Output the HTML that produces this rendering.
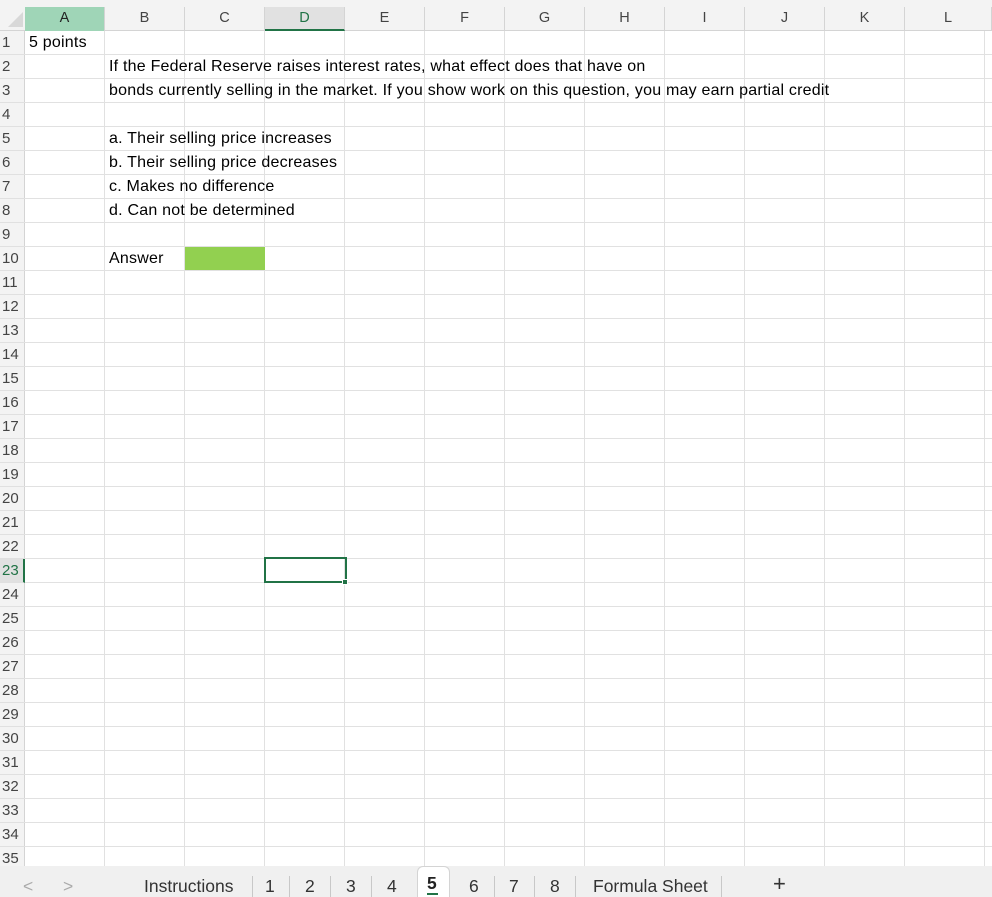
<!DOCTYPE html>
<html><head><meta charset="utf-8"><style>
*{margin:0;padding:0;box-sizing:border-box}
body{width:992px;height:897px;overflow:hidden;background:#fff;font-family:"Liberation Sans",sans-serif;position:relative;color:#000}
.abs{position:absolute}
#top{left:0;top:0;width:992px;height:31px;background:#f3f3f3;border-bottom:1px solid #d4d4d4}
.ch{position:absolute;top:7px;height:24px;border-right:1px solid #d4d4d4;text-align:center;font-size:14.5px;line-height:23px;color:#444}
#rows{left:0;top:31px;width:25px;height:836px;background:#f3f3f3;border-right:1px solid #d4d4d4}
.rn{position:absolute;left:0;width:25px;height:24px;font-size:15px;line-height:24px;padding-left:2px;color:#444;border-bottom:1px solid #e0e0e0}
#grid{left:25px;top:31px;width:967px;height:835px;
background-image:repeating-linear-gradient(to right,transparent 0,transparent 79px,#e1e1e1 79px,#e1e1e1 80px),repeating-linear-gradient(to bottom,transparent 0,transparent 23px,#e1e1e1 23px,#e1e1e1 24px)}
.t{position:absolute;font-size:16px;letter-spacing:0.22px;line-height:24px;white-space:nowrap}
#tabs{left:0;top:866px;width:992px;height:31px;background:#f0f0f0}
.tb{position:absolute;top:876px;font-size:17.5px;color:#333;white-space:nowrap}
.sep{position:absolute;top:876px;width:1px;height:21px;background:#c8c8c8}
</style></head><body>
<div id="top" class="abs"></div>
<svg class="abs" style="left:6px;top:10px" width="18" height="18"><polygon points="17,2 17,17 2,17" fill="#d8d8d8"/></svg>
<div class="ch" style="left:25px;width:80px;background:#9fd5b7;color:#222">A</div>
<div class="ch" style="left:105px;width:80px">B</div>
<div class="ch" style="left:185px;width:80px">C</div>
<div class="ch" style="left:265px;width:80px;background:#e1e1e1;color:#217346;border-bottom:2px solid #217346">D</div>
<div class="ch" style="left:345px;width:80px">E</div>
<div class="ch" style="left:425px;width:80px">F</div>
<div class="ch" style="left:505px;width:80px">G</div>
<div class="ch" style="left:585px;width:80px">H</div>
<div class="ch" style="left:665px;width:80px">I</div>
<div class="ch" style="left:745px;width:80px">J</div>
<div class="ch" style="left:825px;width:80px">K</div>
<div class="ch" style="left:905px;width:87px">L</div>
<div id="rows" class="abs">
<div class="rn" style="top:0">1</div><div class="rn" style="top:24px">2</div><div class="rn" style="top:48px">3</div><div class="rn" style="top:72px">4</div><div class="rn" style="top:96px">5</div><div class="rn" style="top:120px">6</div><div class="rn" style="top:144px">7</div><div class="rn" style="top:168px">8</div><div class="rn" style="top:192px">9</div><div class="rn" style="top:216px">10</div><div class="rn" style="top:240px">11</div><div class="rn" style="top:264px">12</div><div class="rn" style="top:288px">13</div><div class="rn" style="top:312px">14</div><div class="rn" style="top:336px">15</div><div class="rn" style="top:360px">16</div><div class="rn" style="top:384px">17</div><div class="rn" style="top:408px">18</div><div class="rn" style="top:432px">19</div><div class="rn" style="top:456px">20</div><div class="rn" style="top:480px">21</div><div class="rn" style="top:504px">22</div><div class="rn" style="top:528px;background:#e1e1e1;color:#217346;border-right:2px solid #217346">23</div><div class="rn" style="top:552px">24</div><div class="rn" style="top:576px">25</div><div class="rn" style="top:600px">26</div><div class="rn" style="top:624px">27</div><div class="rn" style="top:648px">28</div><div class="rn" style="top:672px">29</div><div class="rn" style="top:696px">30</div><div class="rn" style="top:720px">31</div><div class="rn" style="top:744px">32</div><div class="rn" style="top:768px">33</div><div class="rn" style="top:792px">34</div><div class="rn" style="top:816px">35</div>
</div>
<div id="grid" class="abs"></div>
<div class="abs" style="left:185px;top:247px;width:80px;height:23px;background:#92d050"></div>
<div class="t" style="left:29px;top:31px">5 points</div>
<div class="t" style="left:109px;top:55px">If the Federal Reserve raises interest rates, what effect does that have on</div>
<div class="t" style="left:109px;top:79px">bonds currently selling in the market. If you show work on this question, you may earn partial credit</div>
<div class="t" style="left:109px;top:127px">a. Their selling price increases</div>
<div class="t" style="left:109px;top:151px">b. Their selling price decreases</div>
<div class="t" style="left:109px;top:175px">c. Makes no difference</div>
<div class="t" style="left:109px;top:199px">d. Can not be determined</div>
<div class="t" style="left:109px;top:247px">Answer</div>
<div class="abs" style="left:264px;top:557px;width:83px;height:26px;border:2px solid #217346"></div>
<div class="abs" style="left:342px;top:579px;width:6px;height:6px;background:#217346;border:1px solid #fff"></div>
<div id="tabs" class="abs"></div>
<div class="abs" style="left:417px;top:866px;width:33px;height:31px;background:#fff;border-radius:6px 6px 0 0;border:1px solid #d4d4d4;border-bottom:none"></div>
<div class="tb" style="left:23px;color:#aaa">&lt;</div>
<div class="tb" style="left:63px;color:#aaa">&gt;</div>
<div class="tb" style="left:144px">Instructions</div>
<div class="sep" style="left:252px"></div>
<div class="tb" style="left:265px">1</div>
<div class="sep" style="left:289px"></div>
<div class="tb" style="left:305px">2</div>
<div class="sep" style="left:330px"></div>
<div class="tb" style="left:346px">3</div>
<div class="sep" style="left:371px"></div>
<div class="tb" style="left:387px">4</div>
<div class="tb" style="left:427px;top:873px;font-weight:bold;color:#222">5</div>
<div class="abs" style="left:427px;top:893px;width:11px;height:2px;background:#217346"></div>
<div class="tb" style="left:469px">6</div>
<div class="sep" style="left:494px"></div>
<div class="tb" style="left:509px">7</div>
<div class="sep" style="left:534px"></div>
<div class="tb" style="left:550px">8</div>
<div class="sep" style="left:575px"></div>
<div class="tb" style="left:593px">Formula Sheet</div>
<div class="sep" style="left:721px"></div>
<div class="tb" style="left:773px;font-size:22px;top:871px">+</div>
</body></html>
